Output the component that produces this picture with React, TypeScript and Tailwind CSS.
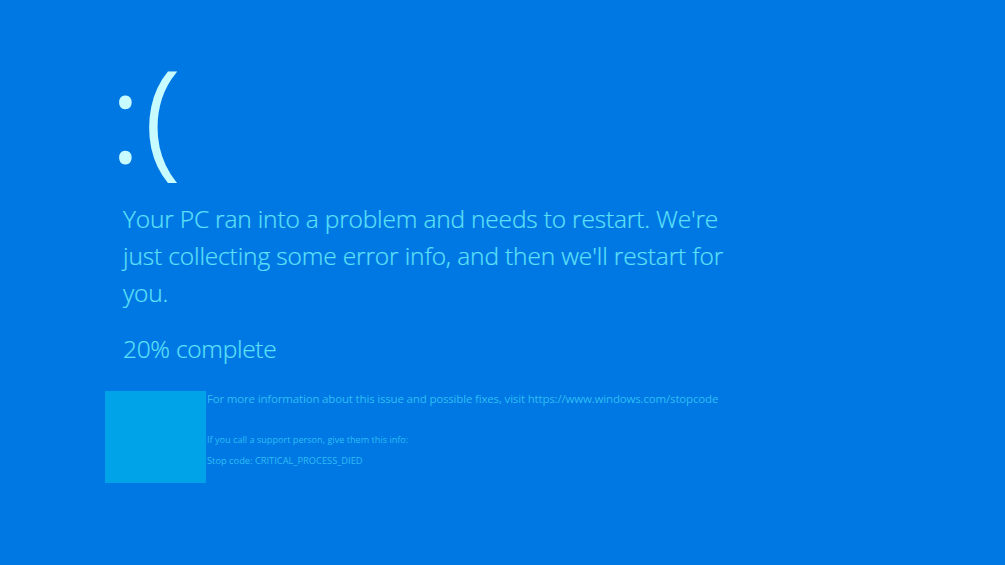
function SadFace() {
  return (
    <div className="-ml-[12px] flex h-[130px] items-start font-light text-[#c8fbff] [-webkit-text-stroke:2px_#c8fbff]">
      <span className="w-[34px] text-[120px] leading-[133px] [-webkit-text-stroke:3px_#c8fbff]">:</span>
      <span className="text-[126px] leading-[128px]">(</span>
    </div>
  );
}

function StopDetails() {
  return (
    <section className="mt-[24px] -ml-[18px] flex">
      <div className="h-[92px] w-[101px] shrink-0 bg-[#00a2e8]" />
      <div className="flex flex-col pl-px whitespace-nowrap text-[#2fbdf5]">
        <p className="h-[38px] text-[11.5px] leading-4 tracking-[-0.17px]">
          For more information about this issue and possible fixes, visit https://www.windows.com/stopcode
        </p>
        <p className="h-[21px] text-[9.15px] leading-[21px]">If you call a support person, give them this info:</p>
        <p className="h-[21px] text-[9.3px] leading-[21px]">Stop code: CRITICAL_PROCESS_DIED</p>
      </div>
    </section>
  );
}

export default function App() {
  return (
    <main className="h-[565px] w-[1005px] overflow-hidden bg-[#0078e3] pt-[49px] pl-[123px] font-['Open_Sans','Noto_Sans',sans-serif]">
      <SadFace />
      <div className="text-[24.5px] leading-[37px] font-light text-[#5fe0f8] [-webkit-text-stroke:0.2px_#5fe0f8]">
        <h1 className="mt-[21px] whitespace-nowrap">
          <span className="block tracking-[-0.18px]">Your PC ran into a problem and needs to restart. We're</span>
          <span className="block tracking-[-0.14px]">just collecting some error info, and then we'll restart for</span>
          <span className="block tracking-[-0.18px]">you.</span>
        </h1>
        <p className="mt-[19px] tracking-[-0.3px]">20% complete</p>
      </div>
      <StopDetails />
    </main>
  );
}
